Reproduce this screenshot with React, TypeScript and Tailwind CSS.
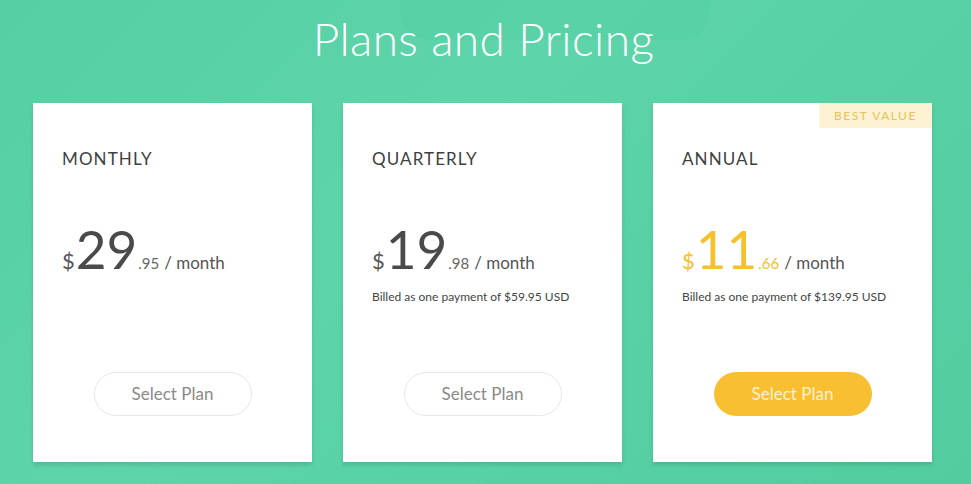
import React from 'react';

type Plan = {
  name: string;
  whole: string;
  cents: string;
  billed?: string;
  featured?: boolean;
};

const plans: Plan[] = [
  { name: 'MONTHLY', whole: '29', cents: '.95' },
  { name: 'QUARTERLY', whole: '19', cents: '.98', billed: 'Billed as one payment of $59.95 USD' },
  { name: 'ANNUAL', whole: '11', cents: '.66', billed: 'Billed as one payment of $139.95 USD', featured: true },
];

function PlanCard({ plan }: { plan: Plan }) {
  const accent = plan.featured ? 'text-[#f6c02e]' : 'text-[#4a4a4a]';
  return (
    <div className="relative flex h-[359px] w-[279px] flex-col bg-white px-[29px] pt-[46px] shadow-[0_3px_4px_rgba(0,0,0,0.12)]">
      {plan.featured && (
        <div className="absolute right-0 top-0 flex h-[25px] w-[113px] items-center justify-center bg-[#fdf2d2] text-[12px] tracking-[1.5px] text-[#e6c35a]">
          BEST VALUE
        </div>
      )}
      <div className="text-[17px] leading-[20px] tracking-[1.1px] text-[#3f3f3f]">{plan.name}</div>
      <div className="mt-[53px] flex items-baseline">
        <span className={`text-[22px] ${plan.featured ? 'text-[#f6c02e]' : 'text-[#555]'}`}>$</span>
        <span className={`ml-[1px] text-[53px] leading-[54px] ${accent}`}>{plan.whole}</span>
        <span className={`ml-[1px] text-[15px] ${plan.featured ? 'text-[#f6c02e]' : 'text-[#666]'}`}>{plan.cents}</span>
        <span className="ml-[5px] text-[17px] text-[#555]">/ month</span>
      </div>
      <div className="mt-[12px] h-[16px] text-[12px] leading-[16px] text-[#444]">{plan.billed}</div>
      <div className="mt-[67px] flex justify-center">
        <button
          className={
            plan.featured
              ? 'h-[44px] w-[158px] rounded-full bg-[#f7bf31] text-[17px] text-[#fdf1d0]'
              : 'h-[44px] w-[158px] rounded-full border border-[#e8e8e8] bg-white text-[17px] text-[#8a8a8a]'
          }
        >
          Select Plan
        </button>
      </div>
    </div>
  );
}

export default function App() {
  return (
    <div
      className="relative h-[484px] w-[971px] overflow-hidden bg-[linear-gradient(135deg,#55cfa3_0%,#5ed4aa_40%,#56d0a4_70%,#52cda0_100%)]"
      style={{ fontFamily: 'Lato, "Open Sans", sans-serif' }}
    >
      <div className="pointer-events-none absolute left-[400px] top-[-40px] h-[80px] w-[310px] rounded-[30px] bg-[#4fcb9e] opacity-25" />
      <div className="relative flex flex-col">
        <h1 className="mt-[11px] self-center pr-[4px] text-[46px] font-light leading-[56px] tracking-[0.4px] text-white">
          Plans and Pricing
        </h1>
        <div className="mt-[36px] flex gap-[31px] pl-[33px]">
          {plans.map((p) => (
            <PlanCard key={p.name} plan={p} />
          ))}
        </div>
      </div>
    </div>
  );
}
